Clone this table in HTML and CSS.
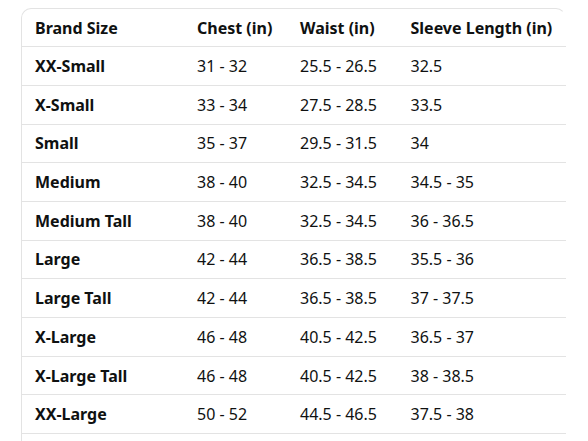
FILE: index.html
```html
<!DOCTYPE html>
<html>
<head>
<meta charset="utf-8">
<link rel="stylesheet" href="styles.css">
</head>
<body>
<div class="wrap">
<table class="size-table">
<colgroup>
<col class="c1"><col class="c2"><col class="c3"><col class="c4">
</colgroup>
<thead>
<tr><th>Brand Size</th><th>Chest (in)</th><th>Waist (in)</th><th class="last">Sleeve Length (in)</th></tr>
</thead>
<tbody>
<tr><th>XX-Small</th><td>31 - 32</td><td>25.5 - 26.5</td><td class="last">32.5</td></tr>
<tr><th>X-Small</th><td>33 - 34</td><td>27.5 - 28.5</td><td class="last">33.5</td></tr>
<tr><th>Small</th><td>35 - 37</td><td>29.5 - 31.5</td><td class="last">34</td></tr>
<tr><th>Medium</th><td>38 - 40</td><td>32.5 - 34.5</td><td class="last">34.5 - 35</td></tr>
<tr><th>Medium Tall</th><td>38 - 40</td><td>32.5 - 34.5</td><td class="last">36 - 36.5</td></tr>
<tr><th>Large</th><td>42 - 44</td><td>36.5 - 38.5</td><td class="last">35.5 - 36</td></tr>
<tr><th>Large Tall</th><td>42 - 44</td><td>36.5 - 38.5</td><td class="last">37 - 37.5</td></tr>
<tr><th>X-Large</th><td>46 - 48</td><td>40.5 - 42.5</td><td class="last">36.5 - 37</td></tr>
<tr><th>X-Large Tall</th><td>46 - 48</td><td>40.5 - 42.5</td><td class="last">38 - 38.5</td></tr>
<tr><th>XX-Large</th><td>50 - 52</td><td>44.5 - 46.5</td><td class="last">37.5 - 38</td></tr>
</tbody>
</table>
</div>
</body>
</html>
```
FILE: styles.css
```css
html, body {
  margin: 0;
  background: #ffffff;
}
body {
  padding: 8px 0 0 21px;
  font-family: "Noto Sans", "Open Sans", Arial, sans-serif;
  color: #0f1111;
  overflow: hidden;
  height: 441px;
  box-sizing: border-box;
}
.wrap {
  width: 545px;
  border: 1px solid #e3e3e3;
  border-right-color: transparent;
  border-bottom: none;
  border-radius: 10px 10px 0 0;
  box-sizing: border-box;
  padding-bottom: 20px;
}
.size-table {
  width: 544px;
  border-collapse: collapse;
  table-layout: fixed;
  font-size: 16px;
}
.c1 { width: 162px; }
.c2 { width: 103px; }
.c3 { width: 110px; }
.c4 { width: 169px; }
.size-table tr {
  height: 38.7px;
}
.size-table th,
.size-table td {
  text-align: left;
  padding: 0 0 0 13px;
  border-bottom: 1px solid #e3e3e3;
  white-space: nowrap;
  line-height: 20px;
}
.size-table th {
  font-weight: 700;
}
.size-table td {
  font-weight: 400;
}
.size-table .last {
  border-left: 1px solid #ffffff;
}
.size-table thead tr {
  height: 37.7px;
}
```
